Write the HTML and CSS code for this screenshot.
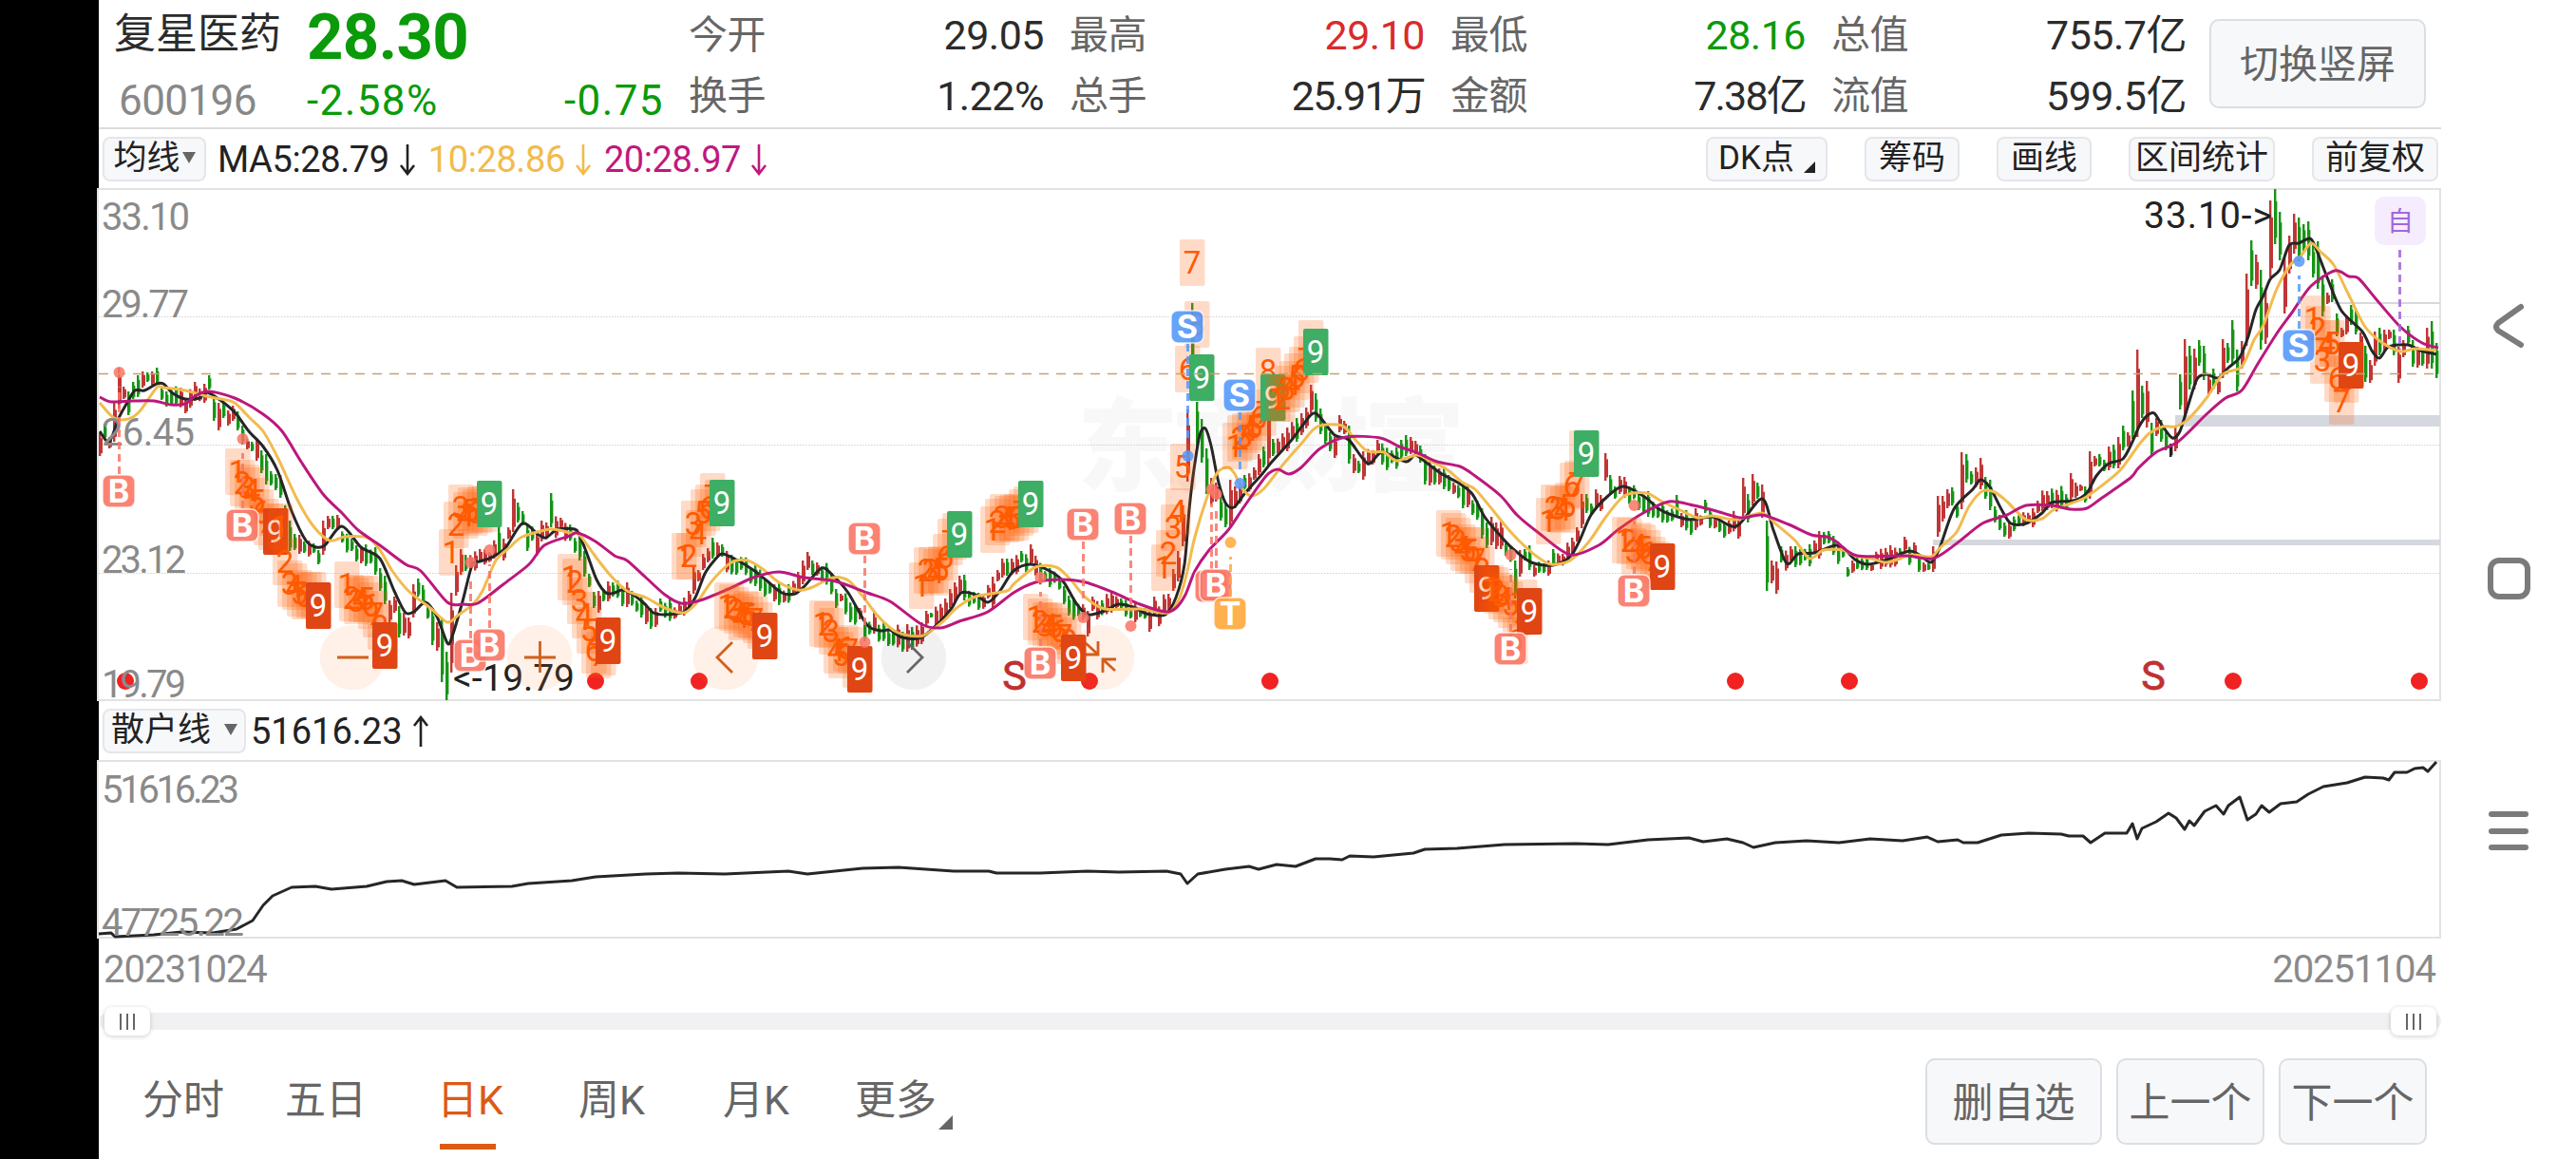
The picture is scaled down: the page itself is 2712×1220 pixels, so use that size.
FILE: index.html
```html
<!DOCTYPE html>
<html lang="zh-CN">
<head>
    <meta charset="utf-8">
    <title>复星医药 600196</title>
    <link rel="stylesheet" href="styles.css">
</head>
<body>
    <div class="notch"></div>
    <main class="main">
        <header class="quote">
            <div class="stock">
                <div class="stock-name">复星医药</div>
                <div class="stock-code">600196</div>
            </div>
            <div class="price">
                <div class="price-now">28.30</div>
                <div class="price-change"><span>-2.58%</span><span>-0.75</span></div>
            </div>
            <div class="stats">
                <div class="stat"><label>今开</label><span>29.05</span></div>
                <div class="stat"><label>最高</label><span class="up">29.10</span></div>
                <div class="stat"><label>最低</label><span class="down">28.16</span></div>
                <div class="stat"><label>总值</label><span>755.7亿</span></div>
                <div class="stat"><label>换手</label><span>1.22%</span></div>
                <div class="stat"><label>总手</label><span class="tight">25.91万</span></div>
                <div class="stat"><label>金额</label><span class="tight">7.38亿</span></div>
                <div class="stat"><label>流值</label><span>599.5亿</span></div>
            </div>
            <button class="btn btn-switch">切换竖屏</button>
        </header>

        <div class="toolbar">
            <button class="chip chip-ma">均线<i class="caret"></i></button>
            <span class="ma ma5">MA5:28.79</span>
            <svg class="arrow ma5" viewBox="0 0 18 34"><path d="M9 1V31M2 23L9 32L16 23"/></svg>
            <span class="ma ma10">10:28.86</span>
            <svg class="arrow ma10" viewBox="0 0 18 34"><path d="M9 1V31M2 23L9 32L16 23"/></svg>
            <span class="ma ma20">20:28.97</span>
            <svg class="arrow ma20" viewBox="0 0 18 34"><path d="M9 1V31M2 23L9 32L16 23"/></svg>
            <div class="tools">
                <button class="chip chip-dk">DK点<i class="corner"></i></button>
                <button class="chip chip-cm">筹码</button>
                <button class="chip chip-hx">画线</button>
                <button class="chip chip-qj">区间统计</button>
                <button class="chip chip-fq">前复权</button>
            </div>
        </div>

        <svg id="kline" class="chart" width="2466" height="540" viewBox="104 198 2466 540"></svg>

        <div class="toolbar toolbar-sub">
            <button class="chip chip-sh">散户线<i class="caret"></i></button>
            <span class="ma ma5 sub-value">51616.23</span>
            <svg class="arrow ma5" viewBox="0 0 18 34"><path d="M9 33V3M2 11L9 2L16 11"/></svg>
        </div>

        <svg id="retail" class="chart" width="2466" height="190" viewBox="104 800 2466 190"></svg>

        <div class="dates"><span>20231024</span><span>20251104</span></div>

        <div class="slider">
            <div class="handle"><i></i><i></i><i></i></div>
            <div class="handle"><i></i><i></i><i></i></div>
        </div>

        <footer class="footer">
            <nav class="tabs">
                <a class="tab">分时</a>
                <a class="tab">五日</a>
                <a class="tab active">日K</a>
                <a class="tab">周K</a>
                <a class="tab">月K</a>
                <a class="tab more">更多<i class="corner"></i></a>
            </nav>
            <div class="actions">
                <button class="btn btn-del">删自选</button>
                <button class="btn">上一个</button>
                <button class="btn">下一个</button>
            </div>
        </footer>
    </main>

    <aside class="sysnav">
        <svg viewBox="0 0 48 48"><path d="M37 4L13 21Q9 25 13 29L37 44"/></svg>
        <svg viewBox="0 0 48 48"><rect x="5" y="5" width="39" height="38" rx="9"/></svg>
        <svg viewBox="0 0 48 48"><path d="M6 6H42M6 24H42M6 41H42"/></svg>
    </aside>

    <script src="chart.js"></script>
</body>
</html>
```
FILE: styles.css
```css
body {
    margin: 0;
    width: 2712px;
    height: 1220px;
    display: flex;
    overflow: hidden;
    background: #fff;
    color: #2b2b2b;
    font-family: Roboto, "Noto Sans CJK SC", sans-serif;
}
button {
    font-family: inherit;
    padding: 0;
    box-sizing: border-box;
}
.notch {
    width: 104px;
    background: #000;
}
.main {
    width: 2466px;
    display: flex;
    flex-direction: column;
}

/* quote header */
.quote {
    height: 136px;
    box-sizing: border-box;
    border-bottom: 2px solid #dcdcdc;
    display: flex;
    padding-left: 16px;
    white-space: nowrap;
}
.stock {
    width: 205px;
}
.stock-name {
    font-size: 44px;
    line-height: 72px;
}
.stock-code {
    font-size: 44px;
    line-height: 68px;
    padding-left: 5px;
    letter-spacing: -0.6px;
    color: #888;
}
.price {
    width: 376px;
    margin-left: -2px;
    margin-right: 26px;
    color: #0a9a0a;
}
.price-now {
    font-size: 67px;
    font-weight: bold;
    line-height: 78px;
    letter-spacing: -0.6px;
}
.price-change {
    display: flex;
    justify-content: space-between;
    font-size: 44px;
    line-height: 56px;
    letter-spacing: 1.4px;
}
.stats {
    display: grid;
    grid-template-columns: repeat(4, 374px);
    grid-template-rows: 64px 64px;
    column-gap: 27px;
    padding-top: 5px;
    height: 128px;
}
.stat {
    display: flex;
    justify-content: space-between;
    font-size: 43px;
    line-height: 64px;
    letter-spacing: -0.5px;
}
.stat label {
    font-size: 41px;
    color: #666;
}
.tight {
    letter-spacing: -1.8px;
}
.up {
    color: #d92b2b;
}
.down {
    color: #0a9a0a;
}
.btn {
    width: 156px;
    height: 91px;
    padding-bottom: 6px;
    font-size: 43px;
    color: #666;
    background: #f7f8fa;
    border: 2px solid #dbdee3;
    border-radius: 10px;
}
.btn-switch {
    width: 228px;
    height: 94px;
    margin: 20px 0 0 24px;
    font-size: 41px;
}

/* toolbars */
.toolbar {
    height: 62px;
    display: flex;
    align-items: center;
    padding-left: 4px;
}
.chip {
    height: 47px;
    font-size: 35px;
    line-height: 42px;
    color: #222;
    background: #f7f8fa;
    border: 2px solid #e4e6ea;
    border-radius: 8px;
    white-space: nowrap;
}
.chip-ma {
    width: 109px;
    margin-right: 12px;
}
.chip-sh {
    width: 151px;
    margin-right: 5px;
}
.chip-sh .caret {
    margin-left: 14px;
}
.caret {
    display: inline-block;
    border: 7px solid transparent;
    border-top: 12px solid #666;
    border-bottom: 0;
    vertical-align: 6px;
    margin-left: 2px;
}
.corner {
    display: inline-block;
    border-left: 12px solid transparent;
    border-bottom: 12px solid #222;
    margin-left: 10px;
    vertical-align: -4px;
}
.ma {
    font-size: 38px;
    letter-spacing: -0.4px;
    padding-top: 2px;
}
.ma5 { color: #222; }
.ma10 { color: #f2bb4e; }
.ma20 { color: #c0187f; }
.sub-value {
    letter-spacing: 0;
}
.arrow {
    width: 18px;
    height: 34px;
    margin: 0 13px 0 10px;
    padding-top: 2px;
    fill: none;
    stroke: currentColor;
    stroke-width: 2.6;
}
.tools {
    margin-left: auto;
    margin-right: 3px;
    display: flex;
    gap: 39px;
}
.chip-dk { width: 128px; }
.chip-cm { width: 100px; }
.chip-hx { width: 100px; }
.chip-qj { width: 154px; }
.chip-fq { width: 133px; }
.chart {
    display: block;
    overflow: visible;
}

/* dates, range slider */
.dates {
    height: 61px;
    display: flex;
    justify-content: space-between;
    padding: 0 6px 0 5px;
    font-size: 40px;
    line-height: 61px;
    letter-spacing: -1px;
    color: #8a8a8a;
}
.slider {
    height: 18px;
    margin: 15px 0 16px;
    padding: 0 5px 0 6px;
    border-radius: 9px;
    background: #f1f1f4;
    display: flex;
    justify-content: space-between;
    align-items: center;
}
.handle {
    width: 48px;
    height: 30px;
    border-radius: 8px;
    background: #fff;
    box-shadow: 0 1px 5px rgba(0,0,0,0.2);
    display: flex;
    justify-content: center;
    align-items: center;
    gap: 5px;
}
.handle i {
    width: 2px;
    height: 17px;
    background: #666;
}

/* period tabs */
.footer {
    height: 120px;
    display: flex;
    justify-content: space-between;
    padding: 14px 15px 0 46px;
    box-sizing: border-box;
    font-size: 43px;
    color: #666;
}
.tabs {
    display: flex;
    gap: 64px;
}
.tab {
    line-height: 88px;
    white-space: nowrap;
}
.tab:nth-child(2) {
    padding-right: 10px;
}
.tab.active {
    color: #dc5a12;
    height: 96px;
    margin-right: 15px;
    background: linear-gradient(#dc5a12, #dc5a12) 3px 100% / 59px 6px no-repeat;
}
.tab:nth-child(4) {
    margin-right: 18px;
}
.tab.more {
    margin-left: 5px;
}
.more .corner {
    border-left-width: 15px;
    border-bottom: 15px solid #666;
    margin-left: 2px;
    vertical-align: -16px;
}
.actions {
    display: flex;
    gap: 15px;
}
.btn-del {
    width: 186px;
}

/* system navigation */
.sysnav {
    flex: 1;
    padding: 319px 0 0 47px;
    display: flex;
    flex-direction: column;
    gap: 218px;
}
.sysnav svg {
    width: 48px;
    height: 48px;
    fill: none;
    stroke: #7b7b7b;
    stroke-width: 6;
    stroke-linecap: round;
}

/* chart parts */
.frame {
    fill: none;
    stroke: #e2e2e2;
    stroke-width: 2;
}
.grid {
    stroke: #d0d0d0;
    stroke-width: 1;
    stroke-dasharray: 1.5 1.5;
}
.last {
    stroke: #c9a06c;
    stroke-width: 1.3;
    stroke-dasharray: 10 8;
}
.gap {
    fill: #d6d8df;
}
.watermark {
    font-size: 106px;
    font-weight: 900;
    fill: #f8f8f8;
}
.axis {
    font-size: 40px;
    fill: #8a8a8a;
}
.note {
    font-size: 39px;
    fill: #222;
}
.line {
    fill: none;
    stroke-width: 3;
    stroke-linejoin: round;
}
.line5 { stroke: #262626; }
.line10 { stroke: #f2bb4e; }
.line20 { stroke: #bb187c; }
.r { fill: #c03636; }
.g { fill: #169416; }
.k { fill: #222; }
.turn {
    fill: #ff5a00;
    fill-opacity: 0.22;
}
.turn-text {
    font-size: 33px;
    text-anchor: middle;
    fill: #ff5a00;
}
.nine-r { fill: #e04514; }
.nine-g { fill: #3dae63; }
.nine-text {
    font-size: 33px;
    text-anchor: middle;
    fill: #fff;
}
.badge {
    stroke: #fff;
    stroke-opacity: 0.75;
    stroke-width: 1.5;
    fill-opacity: 0.9;
}
.badge-text {
    font-family: Inter, sans-serif;
    font-size: 34px;
    font-weight: bold;
    text-anchor: middle;
    fill: #fff;
}
.stem {
    stroke-width: 3;
    stroke-dasharray: 8 5;
    opacity: 0.85;
}
.event {
    fill: #f02222;
}
.event-s {
    font-size: 43px;
    text-anchor: middle;
    fill: #c03030;
    stroke: #c03030;
    stroke-width: 0.8;
}
.tool {
    fill: #ff7a30;
    fill-opacity: 0.11;
}
.tool-off {
    fill: #000;
    fill-opacity: 0.055;
}
.tool-icon {
    fill: none;
    stroke: #d25f1c;
    stroke-width: 2.8;
}
.tool-icon-off {
    stroke: #666;
}
```
FILE: chart.js
```js
const NS = 'http://www.w3.org/2000/svg';
const kline = document.getElementById('kline');
const retail = document.getElementById('retail');

function add(parent, tag, attrs, text) {
    const el = document.createElementNS(NS, tag);
    for (const key in attrs) el.setAttribute(key, attrs[key]);
    if (text !== undefined) el.textContent = text;
    parent.appendChild(el);
    return el;
}

function parse(str) {
    return str.trim().split(/\s+/).map(p => p.split(',').map(Number));
}

const ma5 = parse(`105,454 115,465 125,440 135,422 142,411 152,411 165,404 172,404 182,414 195,420 210,419 218,413
    233,422 248,435 262,454 277,470 292,495 307,538 322,569 333,576 342,574 360,554 380,576 400,588 415,622 427,645
    437,643 448,634 460,649 471,677 476,670 487,633 497,595 505,591 517,587 532,577 550,551 567,563 575,566 587,557
    605,557 610,563 618,583 628,610 638,624 647,624 655,621 665,625 678,635 688,645 700,647 720,644 732,629 742,604
    752,590 760,583 773,588 793,600 807,611 823,624 837,625 847,617 865,598 877,606 893,624 913,658 928,664 937,663
    950,671 970,671 990,654 1002,640 1012,624 1027,626 1040,634 1052,623 1067,601 1085,594 1107,602 1120,613 1133,635
    1145,647 1163,643 1177,636 1193,639 1207,646 1227,647 1238,629 1247,594 1252,536 1257,494 1263,458 1269,451
    1275,469 1282,504 1290,529 1299,534 1310,520 1327,501 1340,485 1360,463 1372,447 1385,435 1405,458 1420,463
    1440,488 1455,476 1480,486 1490,479 1503,488 1518,499 1535,508 1550,520 1563,544 1577,561 1592,577 1612,592
    1635,595 1653,586 1663,569 1675,542 1693,522 1709,512 1730,522 1747,536 1760,542 1780,547 1803,544 1828,554
    1855,525 1867,558 1881,593 1893,583 1910,582 1932,574 1941,577 1953,589 1967,594 1987,589 2010,580 2022,585
    2033,592 2042,577 2057,536 2077,515 2085,505 2095,513 2107,536 2117,551 2133,551 2150,540 2160,529 2183,527
    2197,519 2207,501 2220,488 2235,483 2245,465 2252,449 2260,438 2268,435 2277,449 2287,461 2295,454 2303,429
    2313,399 2323,394 2335,398 2345,388 2358,376 2367,354 2375,326 2383,311 2390,294 2400,284 2410,258 2420,256
    2432,251 2438,261 2450,292 2465,327 2487,349 2497,369 2505,377 2515,365 2535,363 2548,369 2565,373`);

const ma10 = parse(`105,424 120,440 135,441 147,433 165,408 172,408 195,411 217,417 233,420 247,424 263,440 277,454
    293,483 313,526 330,554 347,569 363,565 387,566 400,579 413,601 430,622 453,640 471,655 483,647 498,636 508,622
    522,590 537,576 550,565 580,557 600,561 610,563 627,586 643,606 660,622 680,629 700,640 720,645 733,635 750,611
    770,592 787,590 803,599 820,613 840,621 853,619 877,608 893,611 907,626 923,647 940,663 952,668 972,669 993,654
    1007,640 1027,628 1060,622 1067,615 1090,597 1112,597 1127,610 1143,629 1163,641 1200,641 1230,645 1242,629
    1250,601 1258,565 1272,520 1282,497 1293,492 1300,499 1307,513 1317,522 1330,515 1350,490 1370,467 1387,449
    1413,448 1427,463 1440,475 1457,476 1470,485 1492,479 1507,486 1523,494 1540,508 1553,515 1570,535 1587,556
    1600,570 1617,585 1633,594 1653,590 1673,570 1690,545 1710,522 1733,519 1750,528 1767,536 1787,545 1803,543
    1827,547 1855,540 1870,552 1890,569 1905,588 1920,579 1940,579 1953,585 1970,588 1987,592 2013,584 2033,586
    2043,576 2060,560 2073,533 2087,517 2100,518 2113,528 2133,547 2150,546 2163,536 2193,525 2213,511 2233,494
    2252,468 2263,456 2277,449 2290,449 2303,442 2323,419 2340,394 2360,386 2373,358 2383,342 2397,304 2412,278
    2422,270 2433,256 2443,265 2457,279 2473,311 2490,344 2507,360 2527,370 2543,367 2565,369`);

const ma20 = parse(`105,418 117,423 140,422 162,422 180,426 195,425 205,417 220,412 247,419 277,436 297,454 317,486
    340,520 360,540 377,558 400,574 427,594 443,601 471,634 487,636 503,635 530,615 557,594 573,574 600,564 608,561
    627,570 647,585 660,590 680,608 700,626 717,635 737,632 767,620 793,608 820,602 847,608 880,612 913,624 937,633
    970,657 990,661 1010,654 1040,644 1067,624 1090,613 1117,610 1143,613 1173,624 1200,636 1227,644 1238,640
    1248,626 1258,601 1273,579 1293,558 1310,533 1333,501 1345,494 1357,499 1370,492 1390,472 1417,460 1453,461
    1473,470 1493,477 1513,486 1537,491 1553,501 1580,522 1597,542 1620,561 1653,584 1683,574 1703,558 1730,540
    1757,528 1783,532 1807,538 1833,545 1855,542 1883,552 1907,563 1923,565 1933,570 1955,585 2007,585 2035,588
    2060,572 2087,551 2113,542 2133,532 2160,532 2180,536 2197,535 2213,524 2243,503 2251,493 2270,476 2293,465
    2323,436 2343,419 2360,411 2377,383 2397,351 2413,329 2433,301 2458,285 2473,291 2483,293 2500,313 2527,344
    2550,361 2567,366`);

// bars with a known range: x high low colour
const bars = `105 456 480 r,110 446 462 g,115 460 472 r,120 422 465 r,125 387 430 r,130 407 420 r,135 412 437 g,140 402 420 g,
150 391 408 r,155 392 402 g,160 391 405 r,165 387 405 g,170 408 421 g,175 412 428 g,180 410 427 g,195 420 435 r,205 402 422 r,215 404 424 r,
220 395 410 g,225 418 443 g,230 424 453 r,235 423 440 g,240 432 448 r,245 427 443 r,250 433 453 g,255 448 468 g,
260 462 473 r,265 465 475 g,270 461 485 r,275 474 498 g,280 478 510 g,285 496 511 g,290 499 516 g,295 500 524 g,
305 548 580 g,310 562 579 g,315 563 583 r,320 570 582 g,330 572 582 g,335 579 594 g,340 548 584 r,345 543 557 r,350 543 557 g,355 542 556 r,
370 567 580 g,375 574 591 g,380 575 593 r,395 576 605 g,400 598 622 g,405 606 636 g,410 632 655 r,415 628 645 r,420 638 671 g,425 645 669 r,430 650 672 r,
435 615 650 r,440 609 628 g,445 616 637 g,455 640 679 g,460 655 685 r,465 650 718 g,470 686 737 g,475 624 708 r,
480 595 627 r,485 578 605 r,490 584 601 g,525 555 583 g,530 567 590 r,540 515 560 r,545 529 550 g,550 538 553 g,
555 552 580 g,565 560 585 r,570 548 570 r,580 519 555 g,590 545 556 r,610 560 590 g,615 580 607 g,620 604 618 g,
625 623 640 g,630 622 645 r,635 620 633 g,640 612 633 r,645 613 628 g,655 617 638 g,660 613 639 r,675 626 650 g,680 637 657 r,685 640 662 g,690 640 660 r,
695 630 644 g,720 629 648 r,725 622 638 r,730 596 625 r,735 600 612 r,740 583 600 r,745 577 592 r,750 566 588 g,755 571 586 r,760 573 586 g,
775 588 605 g,805 610 628 g,815 615 633 r,845 590 615 r,850 581 600 r,855 590 605 g,860 592 606 r,880 620 640 g,
885 625 633 r,905 640 652 r,910 655 675 g,920 645 667 r,935 663 680 g,950 665 686 g,955 657 686 r,960 660 684 g,970 655 678 r,
975 643 658 r,980 645 650 g,995 630 650 r,1000 620 640 r,1005 613 634 r,1010 606 625 r,1015 605 632 g,1045 607 640 r,
1050 600 612 r,1055 588 608 r,1060 588 606 g,1065 588 605 r,1075 580 592 g,1085 573 595 r,1120 617 636 g,1125 627 648 g,
1145 643 670 r,1150 628 643 r,1195 634 655 r,1210 640 665 r,1215 628 648 r,1230 625 645 r,1235 599 622 r,1240 580 612 r,1245 532 575 r,
1250 431 507 r,1255 319 382 g,1260 423 470 g,1265 441 487 g,1270 472 520 g,1275 503 532 r,1280 508 528 r,1285 523 548 g,
1290 530 555 g,1295 505 555 r,1300 512 535 r,1305 510 530 r,1310 500 515 g,1320 492 505 r,1325 478 500 r,1330 470 492 g,
1335 425 490 r,1340 462 480 g,1355 450 475 r,1365 440 465 g,1370 435 458 r,1372 423 460 g,1380 405 435 r,1385 414 444 g,1390 430 457 g,
1395 445 467 g,1400 455 475 g,1405 460 482 r,1410 437 455 r,1415 443 457 r,1420 448 488 g,1425 478 498 r,1430 485 498 g,1435 475 505 r,
1450 463 480 r,1475 463 483 g,1480 458 480 g,1485 460 478 r,1490 464 480 r,1495 469 487 g,1500 478 510 g,1505 485 511 r,
1515 493 510 r,1525 500 517 g,1530 508 520 r,1540 507 535 g,1545 512 534 r,1555 527 547 g,1560 535 567 g,1565 550 577 g,
1570 544 574 r,1575 550 578 r,1580 549 578 r,1595 590 630 g,1600 579 607 r,1605 578 590 g,1610 574 600 g,1615 595 607 r,
1630 590 606 r,1635 578 596 g,1655 566 585 r,1660 555 570 r,1665 520 556 r,1670 520 540 g,1675 530 542 g,1685 521 538 r,1690 477 506 r,1695 500 520 g,
1700 512 525 g,1705 501 520 r,1710 502 524 r,1735 517 544 g,1740 528 545 g,1750 528 550 g,1765 521 545 g,1770 540 555 r,1780 545 563 g,
1785 535 558 r,1795 526 540 g,1810 548 560 g,1815 550 566 g,1820 548 562 r,1830 547 567 r,1835 503 545 r,1840 520 550 g,
1845 499 532 r,1850 508 525 g,1855 510 545 r,1860 548 622 g,1865 590 614 r,1870 591 625 r,1875 575 592 g,1885 575 590 r,
1895 578 595 g,1915 559 588 r,1920 560 573 g,1925 559 572 g,1930 564 584 g,1945 597 607 g,1950 590 603 r,1965 585 600 g,
1970 593 601 r,2005 565 580 r,2015 571 585 r,2020 585 602 g,2025 592 602 r,2030 593 600 g,2035 575 602 r,2040 522 565 r,2045 522 549 r,
2050 515 535 r,2055 513 532 g,2060 530 545 g,2065 476 536 r,2070 478 508 g,2075 496 510 g,2080 492 513 r,2085 482 515 r,
2090 502 525 g,2095 505 537 g,2100 533 550 g,2105 542 558 g,2110 550 565 g,2115 550 567 r,2140 535 555 r,2145 527 540 r,
2155 517 537 r,2180 498 527 r,2185 508 524 r,2190 510 517 r,2195 512 529 g,2200 475 525 r,2205 480 491 r,2210 478 491 g,2215 484 496 g,
2220 470 495 r,2225 468 493 g,2230 460 493 r,2235 448 474 g,2240 455 470 r,2245 411 462 g,2250 368 460 r,2255 406 440 g,
2260 401 450 r,2265 445 480 g,2270 440 459 r,2275 442 465 g,2280 455 474 g,2285 467 481 k,2290 450 475 r,2295 394 431 g,
2300 357 440 r,2305 364 410 g,2310 367 410 r,2315 358 385 g,2320 364 400 g,2325 395 416 r,2330 388 410 g,2335 398 415 r,
2340 357 398 r,2345 361 382 g,2350 337 383 g,2355 368 412 g,2360 359 388 r,2365 288 364 r,2370 253 301 g,2375 268 304 r,
2380 284 368 g,2385 307 362 r,2390 211 292 r,2395 199 257 g,2400 223 274 g,2405 271 330 r,2410 248 288 r,2415 225 267 r,
2420 229 275 g,2425 236 265 g,2430 233 274 g,2435 258 292 g,2440 254 304 g,2445 290 333 g,2450 308 320 r,2455 294 318 g,
2460 330 354 g,2465 345 355 r,2470 332 352 r,2475 321 342 g,2480 326 352 g,2485 350 368 r,2490 364 402 g,2495 379 403 r,2500 349 385 r,
2505 345 374 g,2510 347 370 r,2515 347 357 r,2520 347 374 g,2525 365 403 r,2530 358 376 r,2535 343 363 g,2540 358 386 g,
2545 365 387 r,2550 367 385 g,2555 345 388 r,2560 338 388 g,2565 361 398 g`;

function valueAt(line, x) {
    for (let i = 1; i < line.length; i++) {
        if (x <= line[i][0]) {
            const [x0, y0] = line[i - 1];
            const [x1, y1] = line[i];
            return y0 + (y1 - y0) * (x - x0) / (x1 - x0);
        }
    }
    return line[line.length - 1][1];
}

function drawLine(svg, pts, cls) {
    add(svg, 'polyline', { points: pts.map(p => p.join(',')).join(' '), class: 'line ' + cls });
}

// averages are drawn as a curve through every point
function drawCurve(svg, pts, cls) {
    let d = 'M' + pts[0];
    for (let i = 0; i < pts.length - 1; i++) {
        const a = pts[i - 1] || pts[i];
        const b = pts[i];
        const c = pts[i + 1];
        const e = pts[i + 2] || c;
        d += 'C' + [b[0] + (c[0] - a[0]) / 7, b[1] + (c[1] - a[1]) / 7,
            c[0] - (e[0] - b[0]) / 7, c[1] - (e[1] - b[1]) / 7, c[0], c[1]].map(v => v.toFixed(1)).join(' ');
    }
    add(svg, 'path', { d: d, class: 'line ' + cls });
}

// frame, grid, price gaps
add(kline, 'text', { x: 1134, y: 508, class: 'watermark', textLength: 408 }, '东方财富');
add(kline, 'rect', { x: 103, y: 199, width: 2466, height: 538, class: 'frame' });
[333.5, 468.5, 603.5].forEach(y => add(kline, 'line', { x1: 104, x2: 2569, y1: y, y2: y, class: 'grid' }));
add(kline, 'rect', { x: 2457, y: 318, width: 112, height: 2, class: 'gap' });
add(kline, 'rect', { x: 2290, y: 437, width: 279, height: 12, class: 'gap' });
add(kline, 'rect', { x: 2035, y: 568, width: 534, height: 6, class: 'gap' });

// candles
const known = {};
bars.split(',').forEach(b => {
    const [x, hi, lo, c] = b.trim().split(' ');
    known[x] = [+hi, +lo, c];
});
let seed = 7;
function rand() {
    seed = (seed * 16807) % 2147483647;
    return seed / 2147483647;
}
for (let x = 105; x <= 2565; x += 5) {
    let bar = known[x];
    if (!bar) {
        const mid = valueAt(ma5, x + 8) + (rand() - 0.5) * 8;
        const half = 5 + rand() * 7;
        const falling = valueAt(ma5, x + 10) - valueAt(ma5, x);
        bar = [mid - half, mid + half, rand() * 12 - 6 < falling ? 'g' : 'r'];
    }
    const [hi, lo, c] = bar;
    const h = lo - hi;
    add(kline, 'rect', { x: x - 1, y: hi, width: 2.4, height: h, class: c });
    add(kline, 'rect', { x: x - 1, y: hi + h * 0.22, width: c === 'r' ? 4 : 3.4, height: h * 0.66, class: c });
}

drawCurve(kline, ma5, 'line5');
drawCurve(kline, ma10, 'line10');
drawCurve(kline, ma20, 'line20');

// events along the bottom
[132, 627, 736, 1147, 1337, 1827, 1947, 2351, 2547].forEach(x => add(kline, 'circle', { cx: x, cy: 717, r: 9, class: 'event' }));
[1068, 2267].forEach(x => add(kline, 'text', { x: x, y: 726, class: 'event-s' }, 'S'));

// axis labels
[['33.10', 242, 93], ['29.77', 334, 92], ['26.45', 469, 98], ['23.12', 603, 89], ['19.79', 734, 89]].forEach(l =>
    add(kline, 'text', { x: 107, y: l[1], textLength: l[2], class: 'axis' }, l[0]));
add(kline, 'text', { x: 477, y: 727, textLength: 128, class: 'note' }, '<-19.79');
add(kline, 'text', { x: 2257, y: 240, textLength: 135, class: 'note' }, '33.10->');

// floating tools
[371, 568, 764, 1160].forEach(x => add(kline, 'circle', { cx: x, cy: 692, r: 34.3, class: 'tool' }));
add(kline, 'circle', { cx: 962, cy: 692, r: 34.3, class: 'tool-off' });
add(kline, 'path', { d: 'M355 692h33M552 692h33M568.5 675v33M771 676l-16 16l16 16', class: 'tool-icon' });
add(kline, 'path', { d: 'M955 676l16 16l-16 16', class: 'tool-icon tool-icon-off' });
add(kline, 'path', { d: 'M1143 677l12 11M1156 675v14h-14M1174 706l-12-11M1161 708v-14h14', class: 'tool-icon' });

// nine-turn sequences: x of 1, colour of 9, tops of 1..9
const turns = [
    [250, 'r', 472, 484, 489, 492, 503, 515, 525, 530, 535],
    [295, 'r', 530, 567, 590, 593, 600, 603, 602, 602, 613],
    [365, 'r', 591, 605, 608, 606, 606, 613, 622, 635, 655],
    [475, 'g', 557, 528, 510, 518, 513, 515, 512, 511, 506],
    [600, 'r', 583, 588, 608, 623, 639, 660, 665, 662, 650],
    [720, 'g', 561, 561, 527, 537, 515, 510, 498, 505, 505],
    [765, 'r', 613, 615, 618, 625, 622, 623, 628, 634, 645],
    [865, 'r', 632, 633, 640, 660, 665, 658, 660, 675, 680],
    [970, 'g', 592, 576, 576, 578, 575, 562, 546, 540, 538],
    [1045, 'g', 533, 525, 520, 522, 521, 520, 515, 512, 506],
    [1090, 'r', 625, 630, 634, 634, 635, 640, 645, 650, 668],
    [1225, 'g', 573, 558, 531, 514, 467, 364, 252, 317, 373],
    [1300, 'g', 445, 437, 435, 428, 425, 415, 410, 366, 394],
    [1345, 'g', 395, 395, 385, 380, 372, 365, 354, 337, 346],
    [1525, 'r', 537, 540, 545, 552, 555, 555, 565, 575, 595],
    [1570, 'r', 595, 597, 603, 606, 612, 650, 620, 610, 619],
    [1630, 'g', 524, 510, 511, 512, 508, 487, 485, 453, 453],
    [1710, 'r', 544, 545, 556, 550, 552, 558, 565, 570, 572],
    [2435, 'r', 311, 322, 355, 337, 337, 374, 398, 375, 360]
];
turns.forEach(([x0, color, ...tops]) => {
    tops.forEach((top, i) => {
        const x = x0 + i * 5;
        const nine = i === 8;
        add(kline, 'rect', { x: x - 13, y: top, width: 26.5, height: 49, rx: 2, class: nine ? 'nine-' + color : 'turn' });
        add(kline, 'text', { x: x, y: top + 36, class: nine ? 'nine-text' : 'turn-text' }, i + 1);
    });
});

// trade badges: letter, x, badge y, anchor y
const colors = { B: '#fa7565', S: '#5599fb', T: '#ffa93c' };
const trades = [
    ['B', 125, 517, 392], ['B', 255, 553, 462], ['B', 495, 690, 592], ['B', 515, 679, 579],
    ['B', 910, 567, 676], ['B', 1095, 698, 608], ['B', 1140, 552, 650], ['B', 1190, 546, 659],
    ['B', 1275, 617, 515], ['B', 1280, 616, 520], ['B', 1590, 683, 584], ['B', 1720, 622, 532],
    ['S', 1250, 344, 480], ['S', 1305, 416, 509], ['S', 2420, 364, 275], ['T', 1295, 646, 571]
];
trades.forEach(([letter, x, y, anchor]) => {
    const dir = anchor < y ? 1 : -1;
    const color = colors[letter];
    add(kline, 'line', { x1: x + 0.5, x2: x + 0.5, y1: y - 18 * dir, y2: anchor + 15 * dir, stroke: color, class: 'stem' });
    add(kline, 'circle', { cx: x + 0.5, cy: anchor, r: 6, fill: color, opacity: 0.85 });
    add(kline, 'rect', { x: x - 17, y: y - 17, width: 34, height: 34, rx: 7, fill: color, class: 'badge' });
    add(kline, 'text', { x: x, y: y + 12, class: 'badge-text' }, letter);
});

// added-to-watchlist mark
add(kline, 'line', { x1: 2526.5, x2: 2526.5, y1: 263, y2: 368, stroke: '#a366dc', class: 'stem' });
add(kline, 'rect', { x: 2500, y: 207, width: 54, height: 51, rx: 10, fill: '#f5ecfe' });
add(kline, 'text', { x: 2527, y: 243, 'font-size': 28, 'text-anchor': 'middle', fill: '#a366dc' }, '自');

add(kline, 'line', { x1: 104, x2: 2569, y1: 393.5, y2: 393.5, class: 'last' });

// retail holders line
const holders = parse(`104,983 117,982 121,986 162,984 191,981 224,982 249,978 266,969 277,953 287,943 307,934 332,933
    349,936 386,933 407,928 423,927 436,931 469,927 481,934 539,933 556,930 602,927 627,923 680,920 714,919 763,920
    830,917 850,920 908,914 946,913 1004,917 1041,917 1049,919 1095,919 1145,917 1178,918 1228,917 1243,920 1250,930
    1261,920 1290,915 1315,912 1325,915 1344,910 1364,912 1385,904 1400,904 1413,905 1421,901 1446,902 1488,898
    1500,894 1534,893 1584,889 1659,888 1693,889 1735,884 1778,882 1793,886 1818,883 1835,887 1846,892 1869,887
    1902,885 1936,887 1969,883 2003,885 2029,881 2040,886 2061,884 2067,887 2082,887 2107,879 2136,877 2170,878
    2178,880 2193,880 2201,887 2216,877 2239,877 2245,867 2250,883 2255,872 2270,865 2283,856 2291,861 2300,873
    2305,864 2310,869 2321,854 2333,848 2341,857 2346,848 2358,839 2366,863 2375,857 2381,848 2389,855 2401,846
    2418,844 2430,836 2446,828 2471,824 2490,818 2509,819 2515,821 2521,813 2534,813 2542,809 2551,808 2556,812
    2565,802`);
add(retail, 'rect', { x: 103, y: 801, width: 2466, height: 186, class: 'frame' });
drawLine(retail, holders, 'line5');
add(retail, 'text', { x: 107, y: 845, textLength: 145, class: 'axis' }, '51616.23');
add(retail, 'text', { x: 107, y: 985, textLength: 150, class: 'axis' }, '47725.22');
```
